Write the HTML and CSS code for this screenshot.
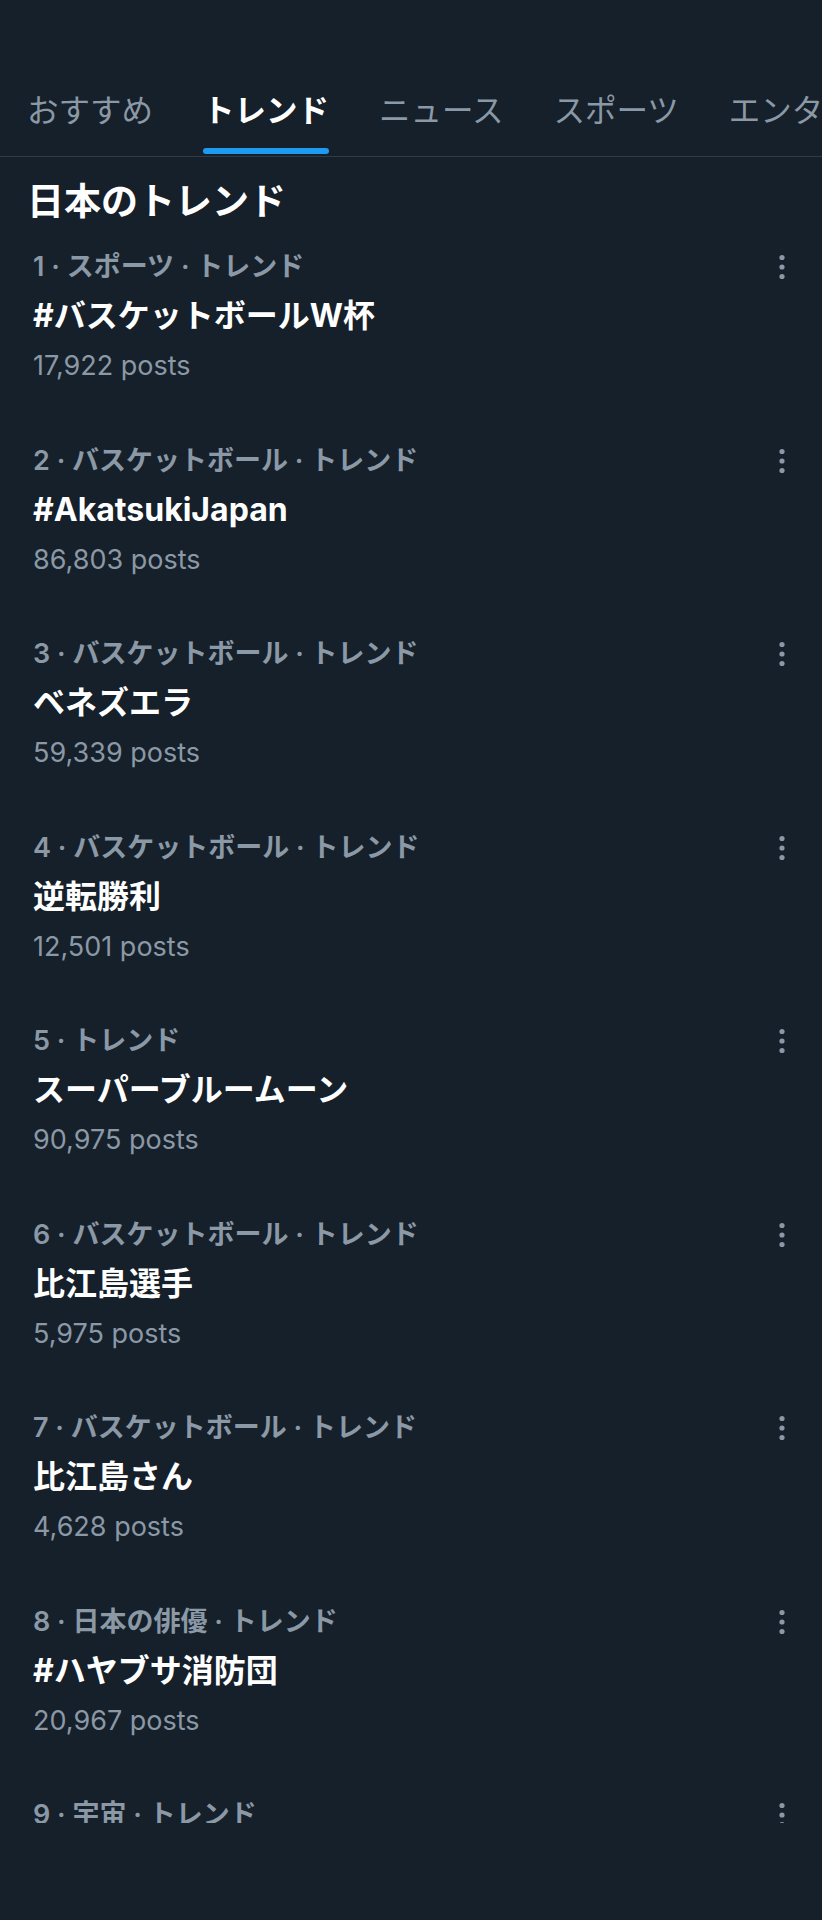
FILE: index.html
```html
<!DOCTYPE html>
<html lang="ja">
<head>
  <meta charset="UTF-8" />
  <meta name="viewport" content="width=device-width, initial-scale=1.0"/>
  <title>トレンド</title>
  <link rel="stylesheet" href="styles.css">
</head>
<body>

<div class="app">
  <!-- タブ -->
  <nav class="tabs">
    <a class="tab"><span class="tab-label">おすすめ</span></a>
    <a class="tab active"><span class="tab-label">トレンド</span><i class="indicator"></i></a>
    <a class="tab"><span class="tab-label">ニュース</span></a>
    <a class="tab"><span class="tab-label">スポーツ</span></a>
    <a class="tab"><span class="tab-label">エンターテイメント</span></a>
  </nav>

  <h1 class="section-title">日本のトレンド</h1>

  <ul class="trend-list">
    <li class="trend">
      <div class="trend-body">
        <div class="meta">1 · スポーツ · トレンド</div>
        <div class="name">#バスケットボールW杯</div>
        <div class="count">17,922 posts</div>
      </div>
      <button class="more"><svg viewBox="0 0 28 28"><circle cx="14" cy="4.5" r="2.6"/><circle cx="14" cy="14" r="2.6"/><circle cx="14" cy="23.5" r="2.6"/></svg></button>
    </li>
    <li class="trend">
      <div class="trend-body">
        <div class="meta">2 · バスケットボール · トレンド</div>
        <div class="name">#AkatsukiJapan</div>
        <div class="count">86,803 posts</div>
      </div>
      <button class="more"><svg viewBox="0 0 28 28"><circle cx="14" cy="4.5" r="2.6"/><circle cx="14" cy="14" r="2.6"/><circle cx="14" cy="23.5" r="2.6"/></svg></button>
    </li>
    <li class="trend">
      <div class="trend-body">
        <div class="meta">3 · バスケットボール · トレンド</div>
        <div class="name">ベネズエラ</div>
        <div class="count">59,339 posts</div>
      </div>
      <button class="more"><svg viewBox="0 0 28 28"><circle cx="14" cy="4.5" r="2.6"/><circle cx="14" cy="14" r="2.6"/><circle cx="14" cy="23.5" r="2.6"/></svg></button>
    </li>
    <li class="trend">
      <div class="trend-body">
        <div class="meta">4 · バスケットボール · トレンド</div>
        <div class="name">逆転勝利</div>
        <div class="count">12,501 posts</div>
      </div>
      <button class="more"><svg viewBox="0 0 28 28"><circle cx="14" cy="4.5" r="2.6"/><circle cx="14" cy="14" r="2.6"/><circle cx="14" cy="23.5" r="2.6"/></svg></button>
    </li>
    <li class="trend">
      <div class="trend-body">
        <div class="meta">5 · トレンド</div>
        <div class="name">スーパーブルームーン</div>
        <div class="count">90,975 posts</div>
      </div>
      <button class="more"><svg viewBox="0 0 28 28"><circle cx="14" cy="4.5" r="2.6"/><circle cx="14" cy="14" r="2.6"/><circle cx="14" cy="23.5" r="2.6"/></svg></button>
    </li>
    <li class="trend">
      <div class="trend-body">
        <div class="meta">6 · バスケットボール · トレンド</div>
        <div class="name">比江島選手</div>
        <div class="count">5,975 posts</div>
      </div>
      <button class="more"><svg viewBox="0 0 28 28"><circle cx="14" cy="4.5" r="2.6"/><circle cx="14" cy="14" r="2.6"/><circle cx="14" cy="23.5" r="2.6"/></svg></button>
    </li>
    <li class="trend">
      <div class="trend-body">
        <div class="meta">7 · バスケットボール · トレンド</div>
        <div class="name">比江島さん</div>
        <div class="count">4,628 posts</div>
      </div>
      <button class="more"><svg viewBox="0 0 28 28"><circle cx="14" cy="4.5" r="2.6"/><circle cx="14" cy="14" r="2.6"/><circle cx="14" cy="23.5" r="2.6"/></svg></button>
    </li>
    <li class="trend">
      <div class="trend-body">
        <div class="meta">8 · 日本の俳優 · トレンド</div>
        <div class="name">#ハヤブサ消防団</div>
        <div class="count">20,967 posts</div>
      </div>
      <button class="more"><svg viewBox="0 0 28 28"><circle cx="14" cy="4.5" r="2.6"/><circle cx="14" cy="14" r="2.6"/><circle cx="14" cy="23.5" r="2.6"/></svg></button>
    </li>
    <li class="trend">
      <div class="trend-body">
        <div class="meta">9 · 宇宙 · トレンド</div>
        <div class="name">#スーパームーン</div>
        <div class="count">31,204 posts</div>
      </div>
      <button class="more"><svg viewBox="0 0 28 28"><circle cx="14" cy="4.5" r="2.6"/><circle cx="14" cy="14" r="2.6"/><circle cx="14" cy="23.5" r="2.6"/></svg></button>
    </li>
  </ul>
</div>

</body>
</html>
```

FILE: styles.css
```css
/* リセット */
* {
  margin: 0;
  padding: 0;
  box-sizing: border-box;
}
body {
  background: #15202b;
  color: #f7f9f9;
  font-family: Inter, "Noto Sans CJK JP", sans-serif;
  height: 1920px;
  overflow: hidden;
}

/* タブ */
.tabs {
  display: flex;
  padding: 87px 0 0 2px;
  border-bottom: 1px solid #2f3b46;
  white-space: nowrap;
  overflow: hidden;
}
.tab {
  display: flex;
  flex-direction: column;
  align-items: center;
  padding: 0 25px 2px;
  font-size: 31.5px;
  color: #8b98a5;
  flex-shrink: 0;
}
.tab-label {
  line-height: 48px;
  padding-bottom: 19px;
}
.tab.active {
  color: #fff;
  font-weight: 700;
}
.tab.active .tab-label {
  padding-bottom: 13px;
}
.indicator {
  display: block;
  width: 100%;
  height: 6px;
  border-radius: 3px;
  background: #1d9bf0;
}

/* 見出し */
.section-title {
  margin-top: 21px;
  padding-left: 27px;
  font-size: 37px;
  line-height: 48px;
  font-weight: 700;
  color: #fff;
}

/* トレンド一覧 */
.trend-list {
  list-style: none;
  height: 1597px;
  overflow: hidden;
}
.trend {
  display: flex;
  justify-content: space-between;
  align-items: flex-start;
  padding: 21px 26px 33.5px 33px;
}
.meta {
  font-size: 27px;
  line-height: 40px;
  font-weight: 600;
  color: #8b98a5;
}
.name {
  margin-top: 8px;
  font-size: 32px;
  line-height: 42px;
  font-weight: 700;
  color: #fff;
}
.count {
  margin-top: 9px;
  font-size: 27px;
  line-height: 40px;
  color: #8b98a5;
}
.more {
  width: 28px;
  height: 28px;
  margin-top: 6px;
  border: none;
  background: none;
}
.more svg {
  display: block;
  width: 28px;
  height: 28px;
  fill: #8b98a5;
}
```
